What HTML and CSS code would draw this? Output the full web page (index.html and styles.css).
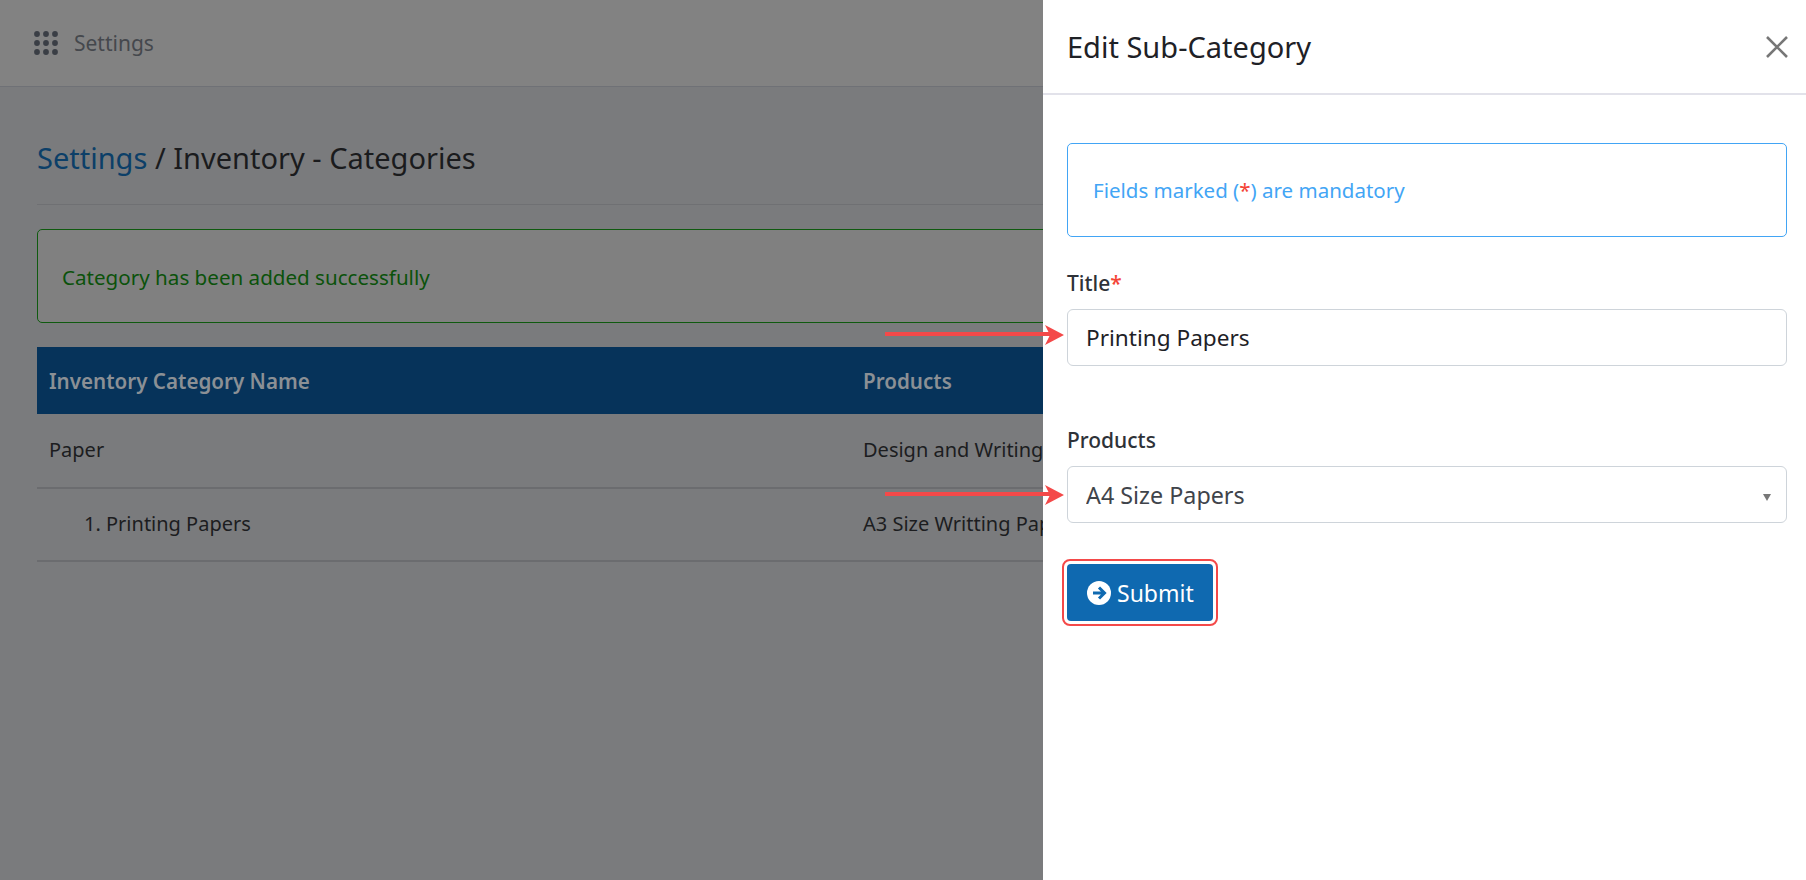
FILE: index.html
```html
<!DOCTYPE html>
<html lang="en">
<head>
  <meta charset="UTF-8">
  <title>Inventory - Categories</title>
  <link rel="stylesheet" href="styles.css">
</head>
<body>
  <div class="page">
    <div class="topbar">
      <svg class="apps-icon" width="24" height="24" viewBox="0 0 24 24">
        <circle cx="3" cy="3" r="2.9"/><circle cx="12" cy="3" r="2.9"/><circle cx="21" cy="3" r="2.9"/>
        <circle cx="3" cy="12" r="2.9"/><circle cx="12" cy="12" r="2.9"/><circle cx="21" cy="12" r="2.9"/>
        <circle cx="3" cy="21" r="2.9"/><circle cx="12" cy="21" r="2.9"/><circle cx="21" cy="21" r="2.9"/>
      </svg>
      <span class="topbar-title">Settings</span>
    </div>
    <main class="content">
      <h1 class="page-title"><a href="#">Settings</a> / Inventory - Categories</h1>
      <div class="alert-success">Category has been added successfully</div>
      <div class="cat-table">
        <div class="cat-row cat-head">
          <div>Inventory Category Name</div>
          <div>Products</div>
        </div>
        <div class="cat-row">
          <div>Paper</div>
          <div>Design and Writing Papers</div>
        </div>
        <div class="cat-row">
          <div class="sub-item">1. Printing Papers</div>
          <div>A3 Size Writting Papers</div>
        </div>
      </div>
    </main>
  </div>

  <aside class="panel">
    <div class="panel-head">
      <h2>Edit Sub-Category</h2>
      <svg class="close-icon" width="22" height="22" viewBox="0 0 22 22">
        <path d="M1 1 21 21M21 1 1 21"/>
      </svg>
    </div>
    <form class="panel-body">
      <div class="alert-info">Fields marked (<span class="req">*</span>) are mandatory</div>
      <label class="field-label" for="title">Title<span class="req">*</span></label>
      <input class="field title-input" id="title" type="text" value="Printing Papers">
      <label class="field-label products-label" for="products">Products</label>
      <div class="select-wrap">
        <select class="field select-input" id="products">
          <option>A4 Size Papers</option>
        </select>
      </div>
      <div class="submit-ring">
        <button class="submit-btn" type="button">
          <svg width="24" height="24" viewBox="0 0 24 24">
            <circle cx="12" cy="12" r="12" fill="#fff"/>
            <path d="M6 12H17M12 6.5 17.5 12 12 17.5" fill="none" stroke="#0f69b0" stroke-width="3"/>
          </svg>
          Submit
        </button>
      </div>
    </form>
  </aside>

  <!-- annotation arrows drawn over the screenshot -->
  <svg class="arrow arrow-title" width="180" height="20" viewBox="0 0 180 20">
    <path d="M0 9H165" stroke="#f44949" stroke-width="4"/>
    <path d="M160 0 179 10 160 20 165 10Z" fill="#f44949"/>
  </svg>
  <svg class="arrow arrow-products" width="180" height="20" viewBox="0 0 180 20">
    <path d="M0 9H165" stroke="#f44949" stroke-width="4"/>
    <path d="M160 0 179 10 160 20 165 10Z" fill="#f44949"/>
  </svg>
</body>
</html>
```

FILE: styles.css
```css
body {
  margin: 0;
  height: 880px;
  overflow: hidden;
  display: flex;
  font-family: "Noto Sans", "Open Sans", sans-serif;
  font-size: 20px;
  background: #7a7b7d;
}

.page {
  width: 1043px;
  flex-shrink: 0;
  overflow: hidden;
}

.topbar {
  height: 87px;
  box-sizing: border-box;
  background: #828282;
  border-bottom: 1px solid #6f7176;
  display: flex;
  align-items: center;
  padding-left: 34px;
  gap: 16px;
}

.apps-icon {
  fill: #3a3e45;
}

.topbar-title {
  font-size: 21px;
  color: #45484d;
}

.content {
  width: 1769px;
  padding-left: 37px;
}

.page-title {
  margin: 0;
  height: 118px;
  box-sizing: border-box;
  padding-top: 49px;
  border-bottom: 1px solid #6f7073;
  font-size: 29px;
  line-height: 44px;
  font-weight: 400;
  color: #1a1b1d;
}

.page-title a {
  color: #0c3f68;
  text-decoration: none;
}

.alert-success {
  margin-top: 24px;
  height: 94px;
  box-sizing: border-box;
  padding: 2px 24px 0;
  display: flex;
  align-items: center;
  border: 1px solid #0f5a0f;
  border-radius: 5px;
  background: #808080;
  font-size: 20.6px;
  color: #0b520b;
}

.cat-table {
  margin-top: 24px;
}

.cat-row {
  display: flex;
  height: 73px;
  box-sizing: border-box;
  align-items: center;
  padding: 0 0 3px 12px;
  border-bottom: 2px solid #6b6c6f;
  color: #1c1d1f;
}

.cat-head + .cat-row {
  height: 75px;
  padding-bottom: 2px;
}

.cat-row > div:first-child {
  width: 814px;
  flex-shrink: 0;
}

.cat-row .sub-item {
  box-sizing: border-box;
  padding-left: 35px;
}

.cat-head {
  height: 67px;
  padding-bottom: 0;
  border-bottom: 0;
  background: #06335a;
  color: #8b9095;
  font-size: 20.6px;
  font-weight: 600;
}

.panel {
  flex: 1;
  background: #fff;
}

.panel-head {
  height: 95px;
  box-sizing: border-box;
  border-bottom: 2px solid #e2e2ea;
  padding: 0 18px 0 24px;
  display: flex;
  align-items: center;
  justify-content: space-between;
}

.panel-head h2 {
  margin: 0;
  font-size: 29px;
  font-weight: 400;
  color: #1e2126;
}

.close-icon path {
  stroke: #777;
  stroke-width: 2.6;
  fill: none;
}

.panel-body {
  padding: 48px 19px 0 24px;
  display: block;
}

.alert-info {
  height: 94px;
  box-sizing: border-box;
  padding: 0 25px;
  display: flex;
  align-items: center;
  white-space: pre;
  border: 1.5px solid #42a5f5;
  border-radius: 5px;
  font-size: 20.5px;
  color: #42a5f5;
}

.req {
  color: #f44336;
}

.field-label {
  display: block;
  margin-top: 31px;
  height: 41px;
  line-height: 30px;
  font-size: 21px;
  font-weight: 500;
  color: #2e3238;
}

.products-label {
  margin-top: 59px;
}

.field {
  display: block;
  width: 100%;
  height: 57px;
  box-sizing: border-box;
  padding: 0 18px;
  border: 1px solid #ced4da;
  border-radius: 6px;
  background: #fff;
  font-family: inherit;
  font-size: 22.6px;
  color: #1e2126;
}

.select-wrap {
  position: relative;
}

.select-wrap::after {
  content: "";
  position: absolute;
  right: 16px;
  top: 28px;
  border-left: 4.5px solid transparent;
  border-right: 4.5px solid transparent;
  border-top: 7px solid #777;
}

.select-input {
  appearance: none;
  font-size: 23.3px;
  color: #3f444b;
}

.submit-ring {
  display: inline-block;
  margin: 36px 0 0 -5px;
  padding: 3px;
  border: 2px solid #f44949;
  border-radius: 8px;
}

.submit-btn {
  height: 57px;
  width: 146px;
  display: flex;
  align-items: center;
  gap: 6px;
  padding: 0 0 0 20px;
  border: 0;
  border-radius: 4px;
  background: #0f69b0;
  color: #fff;
  font-family: inherit;
  font-size: 23px;
}

.arrow {
  position: absolute;
  left: 885px;
}

.arrow-title {
  top: 325px;
}

.arrow-products {
  top: 485px;
}
```
